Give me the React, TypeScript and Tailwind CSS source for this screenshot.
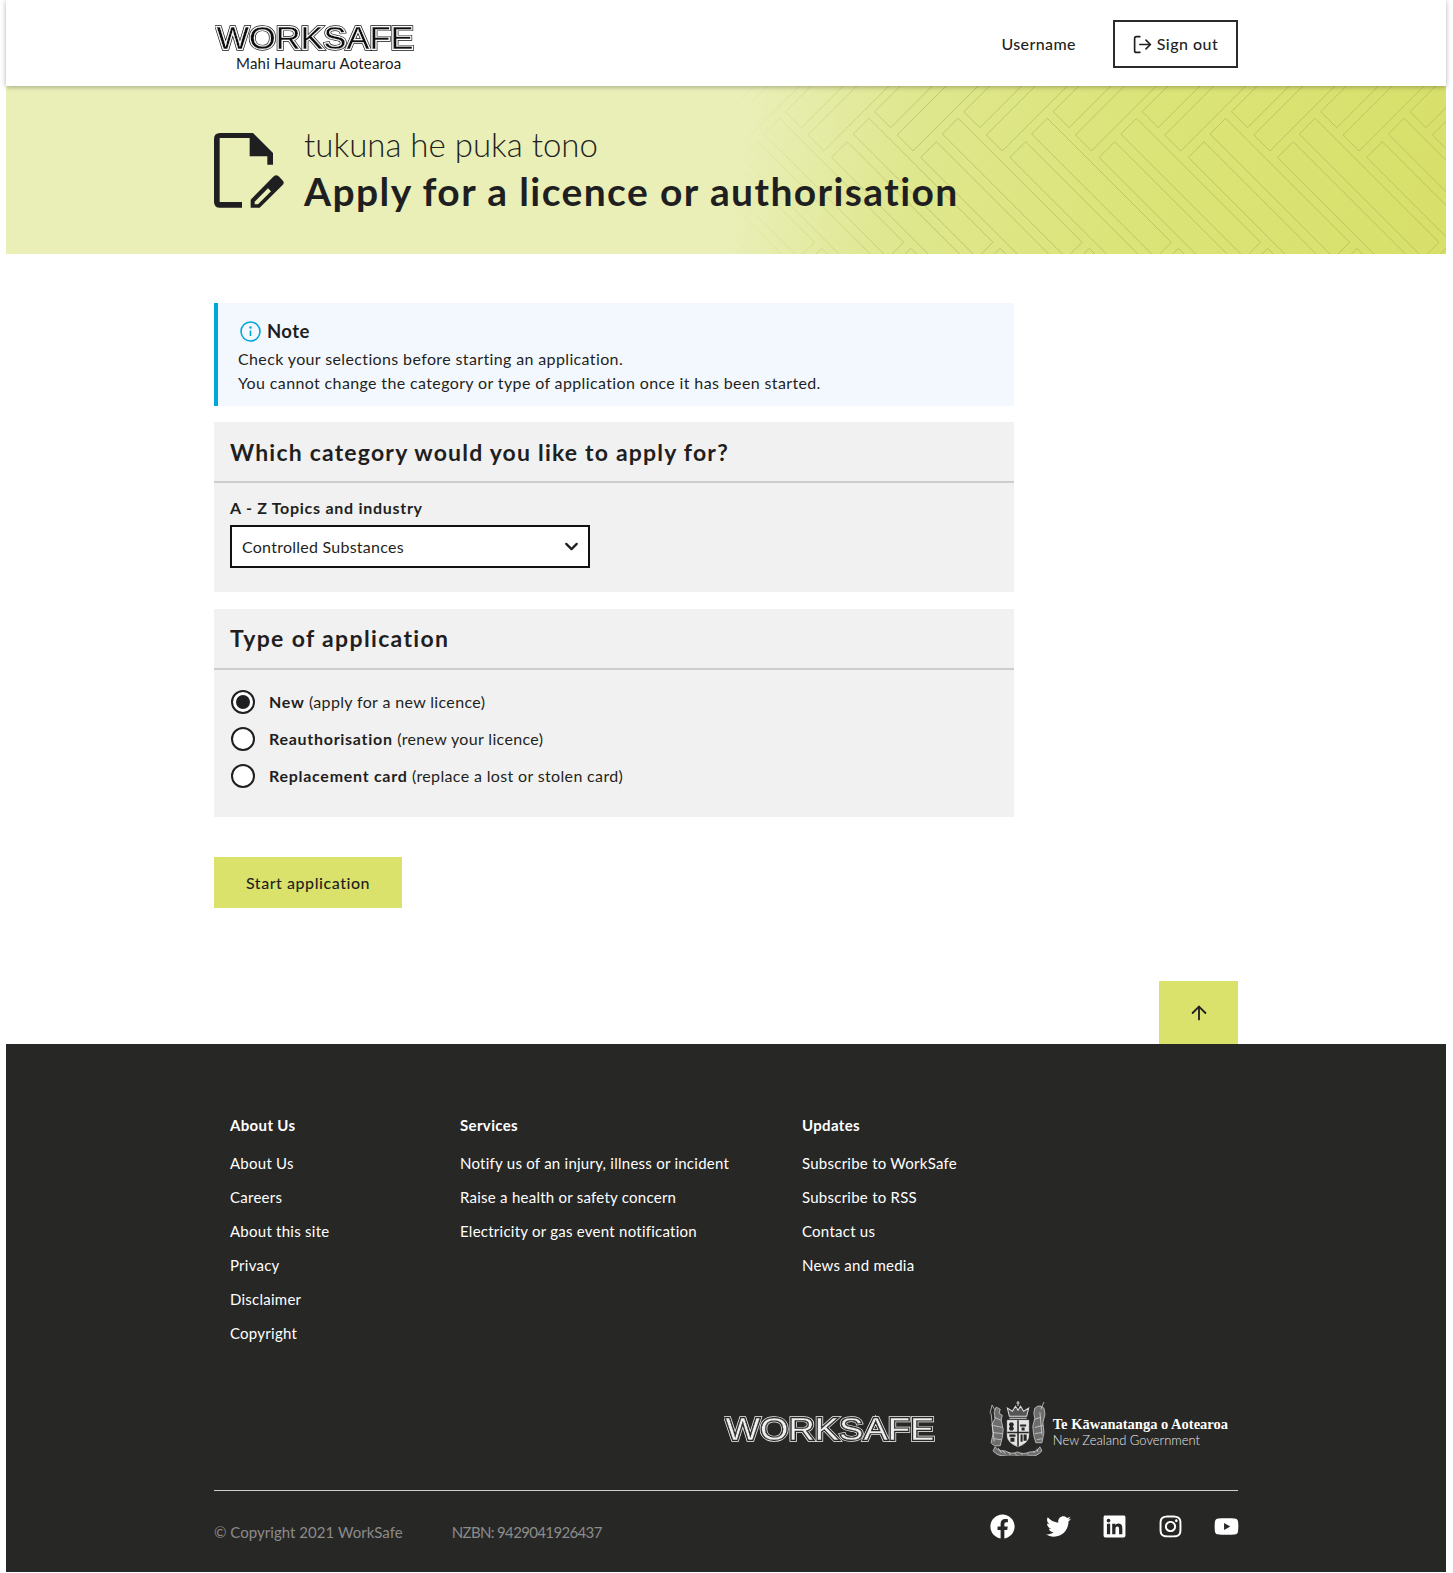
import { ArrowUp, ChevronDown, LogOut } from "lucide-react";
import { FaFacebook, FaInstagram, FaLinkedin, FaTwitter, FaYoutube } from "react-icons/fa";

const aboutLinks = ["About Us", "Careers", "About this site", "Privacy", "Disclaimer", "Copyright"];
const serviceLinks = [
  "Notify us of an injury, illness or incident",
  "Raise a health or safety concern",
  "Electricity or gas event notification",
];
const updateLinks = ["Subscribe to WorkSafe", "Subscribe to RSS", "Contact us", "News and media"];

function Wordmark({ id, width, height, ink, paper }: { id: string; width: number; height: number; ink: string; paper: string }) {
  return (
    <svg width={width} height={height} viewBox="0 0 200 26" preserveAspectRatio="none" className="block opacity-[0.99]">
      <defs>
        <text
          id={id}
          x="1.500"
          y="23.500"
          fontFamily="Liberation Sans, sans-serif"
          fontSize="29.500"
          textLength="197"
          lengthAdjust="spacingAndGlyphs"
        >
          WORKSAFE
        </text>
      </defs>
      <use href={`#${id}`} fill={ink} stroke={ink} strokeWidth="3.200" />
      <use href={`#${id}`} fill={paper} stroke={paper} strokeWidth="2" />
      <use href={`#${id}`} fill={ink} stroke={paper} strokeWidth="0.300" />
    </svg>
  );
}

function HeroPattern() {
  // \ bars start at y 32 and 56, / bars run off the top, next row only peeks in at the bottom
  const shapes: string[] = [];
  for (let k = -8; k < 5; k++) {
    const ox = 1123 + k * 89.2;
    const rect = (x: number, ax: number, ay: number, dx: number, dy: number, lx: number, ly: number) =>
      `M${x + ax} ${ay}l${dx} ${dy}l${lx} ${ly}l${-dx} ${-dy}z`;
    shapes.push(rect(ox, 96.7, 32.3, -15.7, 15.7, 124, 124));
    shapes.push(rect(ox, 75, 55.7, -15.7, 15.7, 124, 124));
    shapes.push(rect(ox, 51.7, 65, -16, -16, 124, -124));
    shapes.push(rect(ox, 29.3, 41.7, -16, -16, 124, -124));
    shapes.push(rect(ox + 42, 96.7, 162.3, -15.7, 15.7, 124, 124));
  }
  return (
    <svg
      width="1440"
      height="168"
      viewBox="0 0 1440 168"
      className="absolute inset-0 [mask-image:linear-gradient(90deg,transparent_50%,black_64%)]"
    >
      <path d={shapes.join("")} fill="none" stroke="#a9b258" strokeOpacity="0.6" strokeWidth="1" />
    </svg>
  );
}

function ApplyIcon() {
  return (
    <svg width="70" height="75" viewBox="28 38 210 225" className="block shrink-0">
      <path
        fill="#1f1f21"
        d="M46 38H145L205 98V133H188V108H135V53H46Q45 53 45 54V244Q45 245 46 245H112V262H46Q28 262 28 244V56Q28 38 46 38Z"
      />
      <path
        fill="#1f1f21"
        fillRule="evenodd"
        d="M138 262V238L205 170Q213 160 222 168L232 178Q242 187 233 195L165 262ZM150 244L190 204L199 213L160 252H150Z"
      />
    </svg>
  );
}

function Crest() {
  return (
    <svg width="58" height="55" viewBox="0 0 57 54" fill="none" stroke="#dcdcdc" className="block shrink-0">
      <g strokeWidth="0.7">
        <path d="M21 15h17l2-8-5 3-3-5-2.500 4-2.500-4-3 5-5-3z" fill="#555" strokeWidth="1" />
        <path d="M29.500 0v5M28 2h3M21 17h17" strokeWidth="1" />
        <path d="M19 19h21v15q0 7-10.500 11Q19 41 19 34z" fill="#e4e4e4" stroke="#f2f2f2" />
        <path d="M29.500 19v26M19 31h21" stroke="#272726" strokeWidth="1.500" />
        <path
          fill="#272726"
          stroke="none"
          d="M21.500 21h3l1 2-1 2 1 2-1 2h-3l-1-2 1-2-1-2zM31.500 23h6v2h-6zM33 26h3v3h-3zM21 33h6v2h-6zM22 36h4v4h-4zM32 33h2v7h-2zM35 33h3v6h-3z"
        />
        <path fill="#6d6d6d" d="M8 6l-2 5 1 6-3 6 1 9-2 9 3 3h6l2-8 1-8-2-9 1-5-3-2 1-4-2-1z" />
        <path d="M2 12l2-8 3 5M3 12l3 28M6 16l7 3M5 24l9 2M5 31l9 1M6 37l7 1" />
        <path fill="#6d6d6d" d="M49 5l-3 2-1 5 1 5-2 8 1 9 2 7h6l2-10-1-10 2-8-1-6-3-2z" />
        <path d="M51 11l2 22M46 18l6-2M46 26l8-2M46 32l7-1M48 38l5-1M55 1l-3 7" />
        <path
          fill="#6d6d6d"
          d="M7 45q4 5 10 4 6 4 12 1 6 3 12 0 6 1 10-5l2 4q-5 6-12 5-6 2-12 0-6 2-13 0-7 0-11-5z"
        />
        <path d="M10 46l3 5M14 48l3 4M20 50l2 3M26 51l2 2M32 51l2 2M38 51l2 2M44 49l2 2M48 47l1 3" />
      </g>
    </svg>
  );
}

function Panel({
  title,
  titleClass,
  children,
  className,
}: {
  title: string;
  titleClass: string;
  children: React.ReactNode;
  className: string;
}) {
  return (
    <section className={`bg-[#f1f1f1] ${className}`}>
      <h2 className={`flex h-[61px] items-center border-b-2 border-[#cdcdcd] px-4 text-[23px] font-bold text-[#1f1f21] ${titleClass}`}>
        {title}
      </h2>
      {children}
    </section>
  );
}

function Radio({ checked, label, hint }: { checked?: boolean; label: string; hint: string }) {
  return (
    <div className="flex h-[37px] items-center gap-[14px] text-[16px] text-[#1f1f21]">
      <span className="flex size-6 items-center justify-center rounded-full border-2 border-[#1f1f21] bg-white">
        {checked && <span className="size-3.5 rounded-full bg-[#1f1f21]" />}
      </span>
      <span className="tracking-[0.35px]">
        <b className="font-bold tracking-[0.72px]">{label}</b> {hint}
      </span>
    </div>
  );
}

function FooterColumn({ title, links, className }: { title: string; links: string[]; className: string }) {
  return (
    <div className={className}>
      <h3 className="text-[15px] leading-[22px] font-bold tracking-[0.35px] text-white">{title}</h3>
      <ul className="mt-[10px]">
        {links.map((l) => (
          <li key={l} className="flex h-[34px] items-center text-[15px] tracking-[0.25px] text-white">
            {l}
          </li>
        ))}
      </ul>
    </div>
  );
}

export default function App() {
  return (
    <div className="mr-[7px] ml-[6px] bg-white font-['Lato','Liberation_Sans',sans-serif] text-[#1f1f21]">
      <header className="relative z-10 h-[86px] bg-white shadow-[0_1px_5px_rgba(0,0,0,0.3)]">
        <div className="mx-auto flex h-full w-[1024px] items-center justify-between">
          <div className="pt-[12px] pl-[1px]">
            <Wordmark id="head-mark" width={200} height={27} ink="#0c0c0c" paper="#ffffff" />
            <p className="mt-[1px] pl-[21px] text-[15px] leading-[20px] tracking-[0.2px] text-[#1a1a1a]">Mahi Haumaru Aotearoa</p>
          </div>
          <div className="flex items-center gap-[37px]">
            <span className="pt-[2px] text-[16px] font-medium tracking-[0.4px]">Username</span>
            <button className="mt-[2px] flex h-[48px] w-[125px] items-center justify-center gap-[4px] border-2 border-[#2b2b2b] text-[16px] font-medium tracking-[0.5px]">
              <LogOut size={21} strokeWidth={1.9} className="-ml-[1px]" />
              Sign out
            </button>
          </div>
        </div>
      </header>

      <div className="relative h-[168px] overflow-hidden bg-[linear-gradient(98deg,#e9efb7_0%,#e9efb7_51%,#dfe78f_62%,#dbe478_78%,#d8e06a_100%)]">
        <HeroPattern />
        <div className="relative mx-auto flex h-full w-[1024px] items-center gap-5">
          <ApplyIcon />
          <div className="pb-[3px]">
            <p className="text-[33px] leading-[44px] font-light">tukuna he puka tono</p>
            <h1 className="text-[39px] leading-[50px] font-bold tracking-[1.4px]">Apply for a licence or authorisation</h1>
          </div>
        </div>
      </div>

      <main className="mx-auto w-[1024px] pt-[49px]">
        <div className="flex h-[103px] w-[800px] flex-col border-l-4 border-[#00a7d8] bg-[#f3f8ff] pt-[15px] pl-5">
          <div className="flex items-center gap-[6px] pl-[2px]">
            <svg width="21" height="21" viewBox="0 0 21 21" fill="none" stroke="#00a7d8" strokeWidth="1.6">
              <circle cx="10.500" cy="10.500" r="9.500" />
              <path d="M10.500 9.500v5.500" />
              <circle cx="10.500" cy="6.500" r="0.500" />
            </svg>
            <strong className="text-[18.500px] leading-[26px] font-bold tracking-[0.4px]">Note</strong>
          </div>
          <p className="mt-[3px] text-[16px] leading-[24px] tracking-[0.37px]">
            Check your selections before starting an application.
            <br />
            You cannot change the category or type of application once it has been started.
          </p>
        </div>

        <Panel
          title="Which category would you like to apply for?"
          titleClass="pt-[1px] tracking-[1.2px]"
          className="mt-4 h-[170px] w-[800px]"
        >
          <div className="px-4 pt-[13px]">
            <label className="block text-[16px] leading-[24px] font-bold tracking-[0.72px]">A - Z Topics and industry</label>
            <div className="mt-[5px] flex h-[43px] w-[360px] items-center justify-between border-2 border-[#111] bg-white pr-[6px] pl-[10px] text-[16px] tracking-[0.25px]">
              Controlled Substances
              <ChevronDown size={21} strokeWidth={2.6} />
            </div>
          </div>
        </Panel>

        <Panel title="Type of application" titleClass="tracking-[1.35px]" className="mt-[17px] h-[208px] w-[800px]">
          <div className="px-[17px] pt-[13px]">
            <Radio checked label="New" hint="(apply for a new licence)" />
            <Radio label="Reauthorisation" hint="(renew your licence)" />
            <Radio label="Replacement card" hint="(replace a lost or stolen card)" />
          </div>
        </Panel>

        <button className="mt-10 h-[51px] w-[188px] bg-[#dae26b] text-[16px] font-medium tracking-[0.55px]">Start application</button>

        <div className="mt-[73px] flex justify-end">
          <button className="flex h-[63px] w-[79px] items-center justify-center bg-[#dae26b]">
            <ArrowUp size={22} strokeWidth={2} />
          </button>
        </div>
      </main>

      <footer className="h-[528px] bg-[#272726]">
        <div className="mx-auto w-[1024px]">
          <div className="flex h-[346px] pt-[70px] pl-4">
            <FooterColumn title="About Us" links={aboutLinks} className="w-[230px]" />
            <FooterColumn title="Services" links={serviceLinks} className="w-[342px]" />
            <FooterColumn title="Updates" links={updateLinks} className="w-[300px]" />
          </div>
          <div className="flex h-[100px] items-start justify-end pr-[10px]">
            <div className="mt-[25px]">
              <Wordmark id="foot-mark" width={212} height={28} ink="#f2f2f2" paper="#272726" />
            </div>
            <div className="mt-[11px] ml-[52px]">
              <Crest />
            </div>
            <div className="mt-[26px] ml-[7px] text-white">
              <p className="font-['Liberation_Serif',serif] text-[14.500px] leading-[16px] font-bold">Te Kāwanatanga o Aotearoa</p>
              <p className="text-[13px] leading-[16px] font-light text-[#e8e8e8]">New Zealand Government</p>
            </div>
          </div>
          <div className="flex h-[82px] items-center justify-between border-t border-[#cfcfcf]">
            <div className="flex gap-[49px] pt-[2px] text-[15px] text-[#8b8b8b]">
              <span className="tracking-[0.03px]">© Copyright 2021 WorkSafe</span>
              <span className="tracking-[-0.65px]">NZBN: 9429041926437</span>
            </div>
            <div className="-mr-[1px] flex items-center gap-[31px] pb-[10px] text-white">
              <FaFacebook size={25} />
              <FaTwitter size={25} />
              <FaLinkedin size={25} />
              <FaInstagram size={25} />
              <FaYoutube size={25} />
            </div>
          </div>
        </div>
      </footer>
    </div>
  );
}
